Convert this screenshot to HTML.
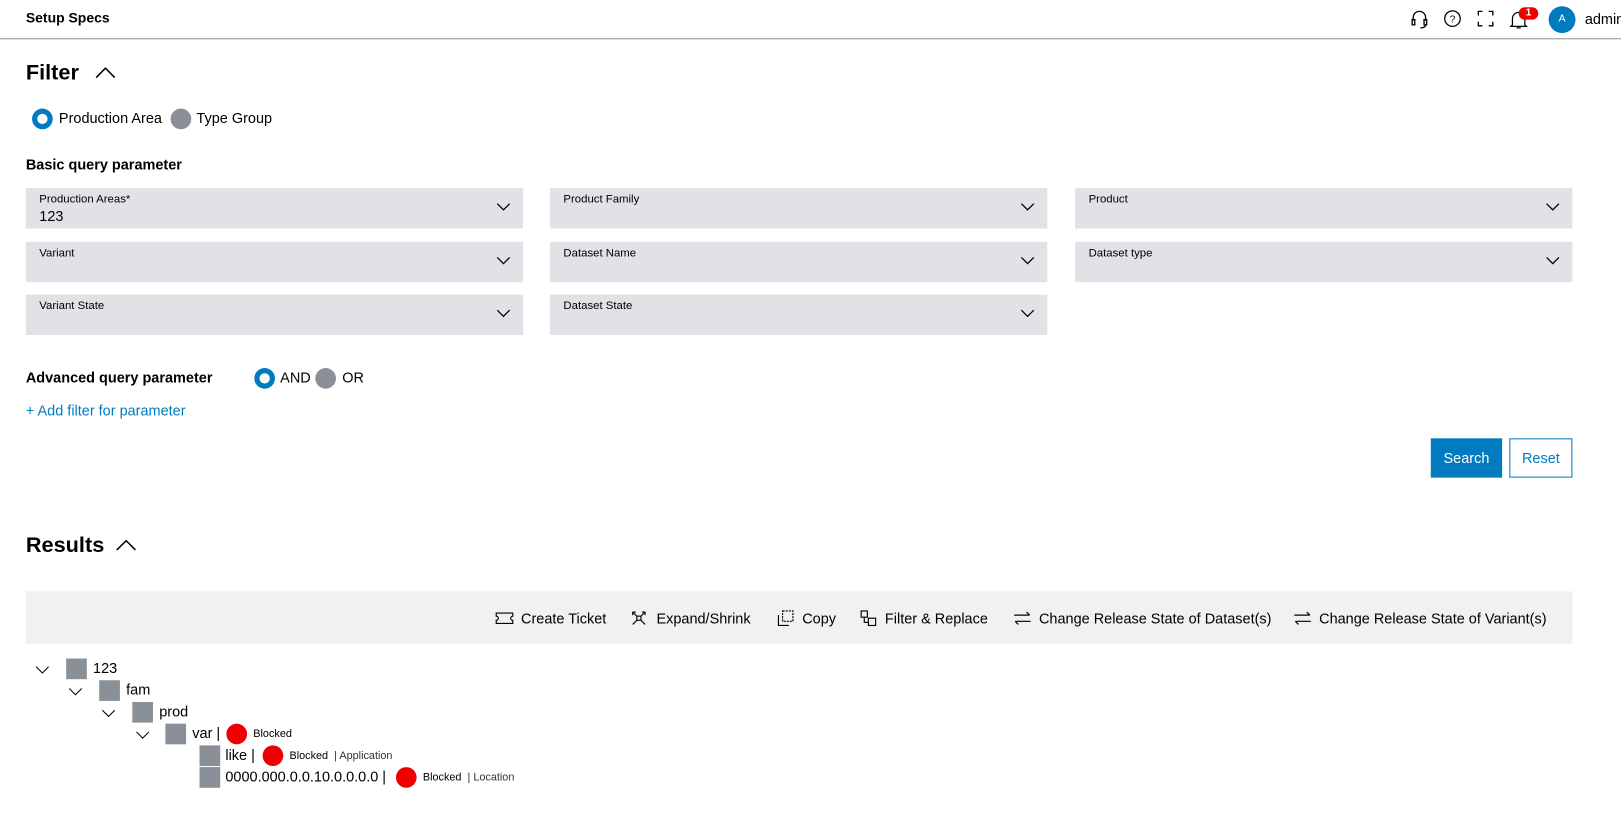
<!DOCTYPE html>
<html><head><meta charset="utf-8"><style>
*{box-sizing:border-box;margin:0;padding:0}
body{width:1621px;height:820px;overflow:hidden;background:#fff;font-family:"Liberation Sans",sans-serif;color:#000;position:relative}
#w{position:absolute;left:0;top:0;width:1568px;height:793px;transform:scale(1.0338);transform-origin:0 0}
.a{position:absolute;white-space:nowrap}
.hdr{position:absolute;left:0;top:0;width:1580px;height:38px;border-bottom:1px solid #8a9097}
.fld{position:absolute;width:481px;height:39px;background:#e0e2e5}
.fld .l{position:absolute;left:13px;top:5px;font-size:11px;color:#000}
.fld .v{position:absolute;left:13px;top:19px;font-size:14px}
.fld svg{position:absolute;right:12px;top:14px}
.rad{position:absolute;width:20px;height:20px;border-radius:50%}
.on{background:#007bc0}.on:after{content:"";position:absolute;left:5px;top:5px;width:10px;height:10px;border-radius:50%;background:#fff}
.off{background:#8a9097}
.sq{position:absolute;width:20px;height:20px;background:#8a9097}
.dot{position:absolute;width:20px;height:20px;border-radius:50%;background:#e00}
.t{font-size:14px}
.tb{font-size:14px;color:#000}
</style></head><body><div id="w">
<div class="hdr"></div>
<div class="a" style="left:25px;top:10px;font-size:13.5px;font-weight:bold">Setup Specs</div>
<svg class="a" style="left:1364px;top:9px" width="18" height="20" viewBox="0 0 18 20" fill="none" stroke="#000" stroke-width="1.3"><path d="M3 11V8a6 6 0 0 1 12 0v3"/><rect x="2" y="10" width="2.5" height="5"/><rect x="13.5" y="10" width="2.5" height="5"/><path d="M15 15c0 2-2 3-5 3"/></svg>
<svg class="a" style="left:1396px;top:9px" width="18" height="18" viewBox="0 0 18 18" fill="none" stroke="#000" stroke-width="1.2"><circle cx="9" cy="9" r="7.5"/><text x="9" y="13" font-size="10" text-anchor="middle" fill="#000" stroke="none" font-family="Liberation Sans">?</text></svg>
<svg class="a" style="left:1429px;top:10px" width="16" height="16" viewBox="0 0 16 16" fill="none" stroke="#000" stroke-width="1.3"><path d="M1 5V1h4M11 1h4v4M15 11v4h-4M5 15H1v-4"/></svg>
<svg class="a" style="left:1460px;top:9px" width="18" height="20" viewBox="0 0 18 20" fill="none" stroke="#000" stroke-width="1.2"><path d="M3 15V9a6 6 0 0 1 12 0v6l1.5 1.5h-15z"/><path d="M7 18h4"/></svg>
<div class="a" style="left:1469px;top:7px;width:19px;height:12px;border-radius:6px;background:#e00;color:#fff;font-size:10px;font-weight:bold;text-align:center;line-height:12px">1</div>
<div class="a" style="left:1498px;top:6px;width:26px;height:26px;border-radius:50%;background:#007bc0;color:#fff;font-size:10px;text-align:center;line-height:26px">A</div>
<div class="a" style="left:1533px;top:10px;font-size:14px">admin</div>

<div class="a" style="left:25px;top:59px;font-size:21px;font-weight:bold">Filter</div>
<svg class="a" style="left:92px;top:64px" width="20" height="12" viewBox="0 0 20 12" fill="none" stroke="#000" stroke-width="1.5"><path d="M1 11L10 2l9 9"/></svg>
<div class="rad on" style="left:31px;top:105px"></div>
<div class="a t" style="left:57px;top:106px">Production Area</div>
<div class="rad off" style="left:165px;top:105px"></div>
<div class="a t" style="left:190px;top:106px">Type Group</div>
<div class="a" style="left:25px;top:151px;font-size:14px;font-weight:bold">Basic query parameter</div>

<div class="fld" style="left:25px;top:182px"><div class="l">Production Areas*</div><div class="v">123</div><svg width="14" height="8" viewBox="0 0 14 8" fill="none" stroke="#000" stroke-width="1.2"><path d="M1 1l6 6 6-6"/></svg></div>
<div class="fld" style="left:532px;top:182px"><div class="l">Product Family</div><svg width="14" height="8" viewBox="0 0 14 8" fill="none" stroke="#000" stroke-width="1.2"><path d="M1 1l6 6 6-6"/></svg></div>
<div class="fld" style="left:1040px;top:182px"><div class="l">Product</div><svg width="14" height="8" viewBox="0 0 14 8" fill="none" stroke="#000" stroke-width="1.2"><path d="M1 1l6 6 6-6"/></svg></div>
<div class="fld" style="left:25px;top:234px"><div class="l">Variant</div><svg width="14" height="8" viewBox="0 0 14 8" fill="none" stroke="#000" stroke-width="1.2"><path d="M1 1l6 6 6-6"/></svg></div>
<div class="fld" style="left:532px;top:234px"><div class="l">Dataset Name</div><svg width="14" height="8" viewBox="0 0 14 8" fill="none" stroke="#000" stroke-width="1.2"><path d="M1 1l6 6 6-6"/></svg></div>
<div class="fld" style="left:1040px;top:234px"><div class="l">Dataset type</div><svg width="14" height="8" viewBox="0 0 14 8" fill="none" stroke="#000" stroke-width="1.2"><path d="M1 1l6 6 6-6"/></svg></div>
<div class="fld" style="left:25px;top:285px"><div class="l">Variant State</div><svg width="14" height="8" viewBox="0 0 14 8" fill="none" stroke="#000" stroke-width="1.2"><path d="M1 1l6 6 6-6"/></svg></div>
<div class="fld" style="left:532px;top:285px"><div class="l">Dataset State</div><svg width="14" height="8" viewBox="0 0 14 8" fill="none" stroke="#000" stroke-width="1.2"><path d="M1 1l6 6 6-6"/></svg></div>

<div class="a" style="left:25px;top:357px;font-size:14px;font-weight:bold">Advanced query parameter</div>
<div class="rad on" style="left:246px;top:356px"></div>
<div class="a t" style="left:271px;top:357px">AND</div>
<div class="rad off" style="left:305px;top:356px"></div>
<div class="a t" style="left:331px;top:357px">OR</div>
<div class="a t" style="left:25px;top:389px;color:#007bc0">+ Add filter for parameter</div>

<div class="a" style="left:1384px;top:424px;width:69px;height:38px;background:#007bc0;color:#fff;font-size:14px;text-align:center;line-height:38px">Search</div>
<div class="a" style="left:1460px;top:424px;width:61px;height:38px;border:1px solid #007bc0;color:#007bc0;font-size:14px;text-align:center;line-height:36px">Reset</div>

<div class="a" style="left:25px;top:516px;font-size:21px;font-weight:bold">Results</div>
<svg class="a" style="left:112px;top:521px" width="20" height="12" viewBox="0 0 20 12" fill="none" stroke="#000" stroke-width="1.5"><path d="M1 11L10 2l9 9"/></svg>

<div class="a" style="left:25px;top:572px;width:1496px;height:51px;background:#eff1f2"></div>
<svg class="a" style="left:479px;top:591px" width="18" height="14" viewBox="0 0 18 14" fill="none" stroke="#000" stroke-width="1.1"><path d="M1 2h16v3a2 2 0 0 0 0 4v3H1V9a2 2 0 0 0 0-4z"/></svg>
<div class="a tb" style="left:504px;top:590px">Create Ticket</div>
<svg class="a" style="left:611px;top:591px" width="14" height="14" viewBox="0 0 14 14" fill="none" stroke="#000" stroke-width="1.1"><path d="M1 1l4 4M13 1l-4 4M1 13l4-4M13 13l-4-4M1 1h3M1 1v3M13 1h-3M13 1v3"/><rect x="5" y="5" width="4" height="4"/></svg>
<div class="a tb" style="left:635px;top:590px">Expand/Shrink</div>
<svg class="a" style="left:752px;top:590px" width="16" height="16" viewBox="0 0 16 16" fill="none" stroke="#000" stroke-width="1.1"><rect x="5" y="1" width="10" height="10" stroke-dasharray="2 1"/><path d="M1 5v10h10"/></svg>
<div class="a tb" style="left:776px;top:590px">Copy</div>
<svg class="a" style="left:832px;top:590px" width="16" height="16" viewBox="0 0 16 16" fill="none" stroke="#000" stroke-width="1.1"><rect x="1" y="1" width="6" height="6"/><rect x="8" y="8" width="7" height="7"/><path d="M4 7v5h4"/></svg>
<div class="a tb" style="left:856px;top:590px">Filter &amp; Replace</div>
<svg class="a" style="left:980px;top:591px" width="18" height="14" viewBox="0 0 18 14" fill="none" stroke="#000" stroke-width="1.2"><path d="M1 4h15M13 1l3 3M17 10H2M5 13l-3-3"/></svg>
<div class="a tb" style="left:1005px;top:590px">Change Release State of Dataset(s)</div>
<svg class="a" style="left:1251px;top:591px" width="18" height="14" viewBox="0 0 18 14" fill="none" stroke="#000" stroke-width="1.2"><path d="M1 4h15M13 1l3 3M17 10H2M5 13l-3-3"/></svg>
<div class="a tb" style="left:1276px;top:590px">Change Release State of Variant(s)</div>

<svg class="a" style="left:34px;top:644px" width="14" height="8" viewBox="0 0 14 8" fill="none" stroke="#000" stroke-width="1"><path d="M1 1l6 6 6-6"/></svg>
<div class="sq" style="left:64px;top:637px"></div><div class="a t" style="left:90px;top:638px">123</div>
<svg class="a" style="left:66px;top:665px" width="14" height="8" viewBox="0 0 14 8" fill="none" stroke="#000" stroke-width="1"><path d="M1 1l6 6 6-6"/></svg>
<div class="sq" style="left:96px;top:658px"></div><div class="a t" style="left:122px;top:659px">fam</div>
<svg class="a" style="left:98px;top:686px" width="14" height="8" viewBox="0 0 14 8" fill="none" stroke="#000" stroke-width="1"><path d="M1 1l6 6 6-6"/></svg>
<div class="sq" style="left:128px;top:679px"></div><div class="a t" style="left:154px;top:680px">prod</div>
<svg class="a" style="left:131px;top:707px" width="14" height="8" viewBox="0 0 14 8" fill="none" stroke="#000" stroke-width="1"><path d="M1 1l6 6 6-6"/></svg>
<div class="sq" style="left:160px;top:700px"></div><div class="a t" style="left:186px;top:701px">var |</div>
<div class="dot" style="left:219px;top:700px"></div><div class="a" style="left:245px;top:704px;font-size:10.5px">Blocked</div>
<div class="sq" style="left:193px;top:721px"></div><div class="a t" style="left:218px;top:722px">like |</div>
<div class="dot" style="left:254px;top:721px"></div><div class="a" style="left:280px;top:725px;font-size:10.5px">Blocked <span style="color:#333">&nbsp;| Application</span></div>
<div class="sq" style="left:193px;top:742px"></div><div class="a t" style="left:218px;top:743px">0000.000.0.0.10.0.0.0.0 |</div>
<div class="dot" style="left:383px;top:742px"></div><div class="a" style="left:409px;top:746px;font-size:10.5px">Blocked <span style="color:#333">&nbsp;| Location</span></div>
</div></body></html>
